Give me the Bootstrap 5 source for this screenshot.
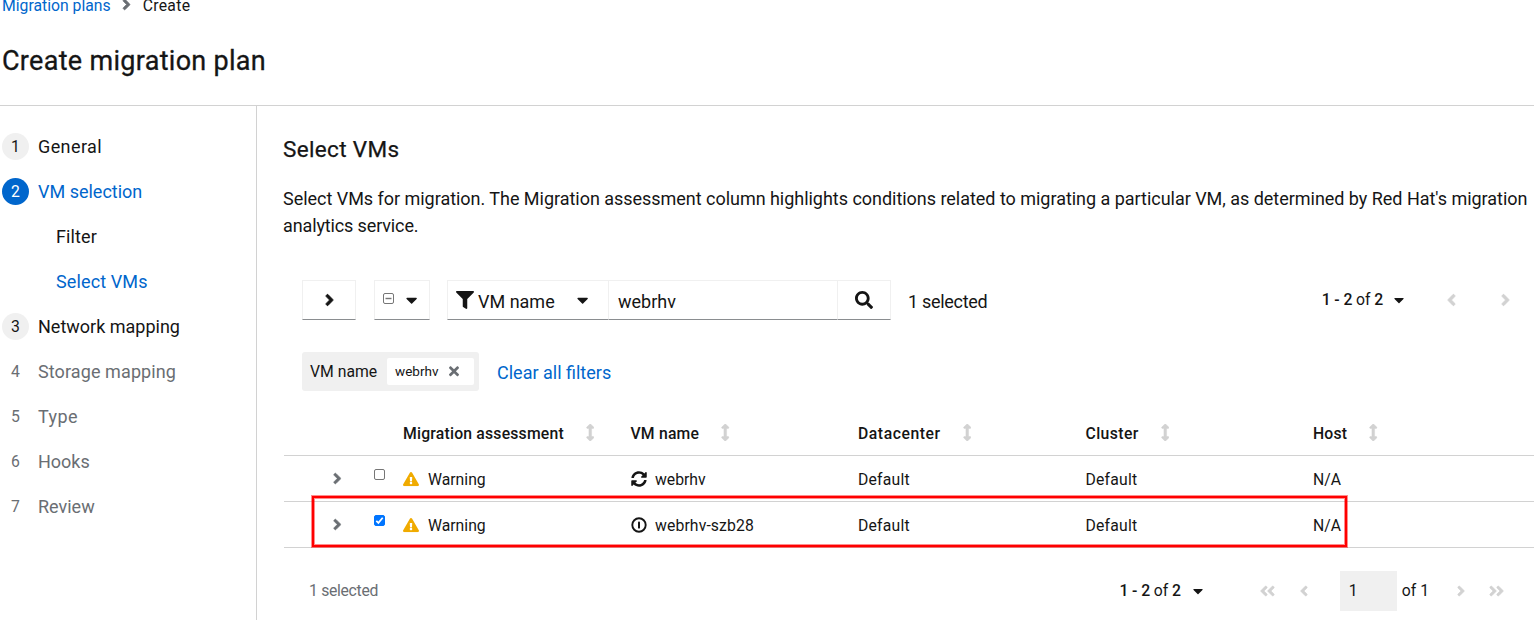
<!DOCTYPE html>
<html lang="en">
<head>
<meta charset="utf-8">
<title>Create migration plan</title>
<link href="https://cdn.jsdelivr.net/npm/bootstrap@5.3.0/dist/css/bootstrap.min.css" rel="stylesheet">
<style>
body{font-family:Roboto,sans-serif;font-size:18px;line-height:27px;color:#151515;background:#fff;height:620px;overflow:hidden}
a{color:#06c;text-decoration:none}
svg{display:block;fill:currentColor;flex:none}
.fs-sm{font-size:15.75px;line-height:24px}
.page-head{display:flow-root;height:106px;border-bottom:1px solid #d2d2d2;padding-left:2px}
.crumbs{height:12px;line-height:12px}
.crumbs svg{color:#6a6e73;margin:-4px 12px 0 11px}
.page-title{font-size:27px;line-height:35px;font-weight:400;margin:32px 0 0;letter-spacing:.3px;-webkit-text-stroke:.3px}
.steps{width:257px;height:514px;border-right:1px solid #d2d2d2;padding:18px 0 0 2px;flex:none}
.step{height:45px;color:#151515}
.step-no{width:27px;height:27px;border-radius:50%;font-size:15.75px;margin-right:9px}
.step-no.open{background:#f0f0f0}
.step.active,.substep.active{color:#06c}
.step.active .step-no{background:#06c;color:#fff}
.step.off{color:#6a6e73}
.substep{height:45px;padding-left:54px;letter-spacing:.12px}
.pane{padding:29px 0 0 26px;min-width:0}
.pane h2{font-size:22.5px;line-height:29px;font-weight:400;margin:0 0 21px;letter-spacing:.35px;-webkit-text-stroke:.25px}
.intro{margin:0 0 41px;white-space:nowrap;letter-spacing:-.03px}
.tools{padding-left:19px;height:40px}
.ctl{height:40px;border:1px solid #f0f0f0;border-bottom-color:#8a8d90;border-radius:0;padding:0;background:#fff;color:#151515}
.faint{color:#d2d2d2}
.filters{padding-left:19px;margin-top:32px;height:39px}
.chips{background:#f0f0f0;border-radius:3px;height:39px;width:177px;padding:0 5px 0 8px}
.chip{background:#fff;height:27px;width:87px;border-radius:2px;font-size:13.5px;padding:0 15px 0 8px}
.vm-grid{table-layout:fixed;width:1250px;margin-top:19px;margin-left:1px;font-size:15.75px;line-height:24px}
.vm-grid th,.vm-grid td{padding:0;height:46px;border-bottom:1px solid #d2d2d2;vertical-align:middle}
.vm-grid th{height:45px;font-weight:500}
.vm-grid th>div{letter-spacing:.2px;padding-top:3px}
.vm-grid td>div{padding-top:3px}
.sort{color:#d2d2d2;margin:-2px 0 0 22px}
.box{width:11px;height:11px;border:1px solid #767676;border-radius:2px;background:#fff;margin:-10px 0 0 37px;flex:none}
.box.on{background:#0075ff;border-color:#0075ff;color:#fff}
.mark-frame{position:absolute;left:29px;top:86px;width:1035px;height:51px;border:2px solid #f00;box-shadow:0 0 0 1px rgba(255,0,0,.45),inset 0 0 0 1px rgba(255,0,0,.45);pointer-events:none}
.foot{padding-left:26px;margin-top:23px;height:40px}
.page-no{width:57px;height:40px;background:#f0f0f0;border:0;padding:0 9px;font-size:15.75px}
.bold{font-weight:500}
</style>
</head>
<body>
<svg width="0" height="0" class="position-absolute" aria-hidden="true">
<symbol id="right" viewBox="0 0 256 512"><path stroke="currentColor" stroke-width="20" d="M224.3 273l-136 136c-9.4 9.4-24.6 9.4-33.9 0l-22.6-22.6c-9.4-9.4-9.4-24.6 0-33.9l96.4-96.4-96.4-96.4c-9.4-9.4-9.4-24.6 0-33.9L54.3 103c9.4-9.4 24.6-9.4 33.9 0l136 136c9.5 9.4 9.5 24.6.1 34z"/></symbol>
<symbol id="left" viewBox="0 0 256 512"><path stroke="currentColor" stroke-width="20" d="M31.7 239l136-136c9.4-9.4 24.6-9.4 33.9 0l22.6 22.6c9.4 9.4 9.4 24.6 0 33.9L127.9 256l96.4 96.4c9.4 9.4 9.4 24.6 0 33.9L201.7 409c-9.4 9.4-24.6 9.4-33.9 0l-136-136c-9.5-9.4-9.5-24.6-.1-34z"/></symbol>
<symbol id="caret" viewBox="0 0 320 512"><path d="M31.3 192h257.3c17.8 0 26.7 21.5 14.1 34.1L174.1 354.8c-7.8 7.8-20.5 7.8-28.3 0L17.2 226.1C4.6 213.5 13.5 192 31.3 192z"/></symbol>
<symbol id="sort" viewBox="0 0 256 512"><path stroke="currentColor" stroke-width="14" d="M214.059 377.941H168V134.059h46.059c21.382 0 32.09-25.851 16.971-40.971L144.971 7.029c-9.373-9.373-24.568-9.373-33.941 0L24.971 93.088c-15.119 15.119-4.411 40.971 16.971 40.971H88v243.882H41.941c-21.382 0-32.09 25.851-16.971 40.971l86.059 86.059c9.373 9.373 24.568 9.373 33.941 0l86.059-86.059c15.12-15.119 4.412-40.971-16.97-40.971z"/></symbol>
<symbol id="warn" viewBox="0 0 576 512"><path d="M569.517 440.013C587.975 472.007 564.806 512 527.94 512H48.054c-36.937 0-59.999-40.055-41.577-71.987L246.423 23.985c18.467-32.009 64.72-31.951 83.154 0l239.94 416.028zM288 354c-25.405 0-46 20.595-46 46s20.595 46 46 46 46-20.595 46-46-20.595-46-46-46zm-43.673-165.346l7.418 136c.347 6.364 5.609 11.346 11.982 11.346h48.546c6.373 0 11.635-4.982 11.982-11.346l7.418-136c.375-6.874-5.098-12.654-11.982-12.654h-63.383c-6.884 0-12.356 5.78-11.981 12.654z"/></symbol>
</svg>

<header class="page-head">
  <nav class="crumbs fs-sm d-flex align-items-center"><a href="#">Migration plans</a><svg width="9" height="17"><use href="#right"/></svg><span style="letter-spacing:.3px">Create</span></nav>
  <h1 class="page-title">Create migration plan</h1>
</header>

<div class="d-flex">
  <nav class="steps">
    <div class="step d-flex align-items-center"><span class="step-no open d-flex align-items-center justify-content-center">1</span><span style="letter-spacing:.4px">General</span></div>
    <div class="step active d-flex align-items-center"><span class="step-no d-flex align-items-center justify-content-center">2</span>VM selection</div>
    <div class="substep d-flex align-items-center">Filter</div>
    <div class="substep active d-flex align-items-center">Select VMs</div>
    <div class="step d-flex align-items-center"><span class="step-no open d-flex align-items-center justify-content-center">3</span>Network mapping</div>
    <div class="step off d-flex align-items-center"><span class="step-no d-flex align-items-center justify-content-center">4</span><span style="letter-spacing:.1px">Storage mapping</span></div>
    <div class="step off d-flex align-items-center"><span class="step-no d-flex align-items-center justify-content-center">5</span><span style="letter-spacing:.4px">Type</span></div>
    <div class="step off d-flex align-items-center"><span class="step-no d-flex align-items-center justify-content-center">6</span>Hooks</div>
    <div class="step off d-flex align-items-center"><span class="step-no d-flex align-items-center justify-content-center">7</span>Review</div>
  </nav>

  <main class="pane flex-grow-1">
    <h2>Select VMs</h2>
    <p class="intro">Select VMs for migration. The Migration assessment column highlights conditions related to migrating a particular VM, as determined by Red Hat's migration<br><span style="letter-spacing:-.13px">analytics service.</span></p>

    <div class="tools d-flex align-items-center">
      <button class="btn ctl d-flex align-items-center justify-content-center" style="width:54px"><svg width="9" height="18"><use href="#right"/></svg></button>
      <button class="btn ctl d-flex align-items-center" style="width:56px;margin-left:18px;padding-left:8px"><svg width="11" height="11" viewBox="0 0 11 11" stroke="#767676" style="fill:none;margin-top:-3px"><rect x=".5" y=".5" width="10" height="10" rx="1.5"/><path d="M2.5 5.5h6" stroke-width="1.4"/></svg><svg width="11.25" height="18" style="margin-left:12px"><use href="#caret"/></svg></button>
      <div class="d-flex" style="margin-left:17px">
        <button class="btn ctl d-flex align-items-center" style="width:162px;padding-left:8px;font-size:18px"><svg width="18" height="18" viewBox="0 0 512 512"><path d="M487.976 0H24.028C2.71 0-8.047 25.866 7.058 40.971L192 225.941V432c0 7.831 3.821 15.17 10.237 19.662l80 55.98C298.02 518.69 320 507.493 320 487.98V225.941l184.947-184.97C520.021 25.896 509.338 0 487.976 0z"/></svg><span style="margin:2px 0 0 4px">VM name</span><svg width="11.25" height="18" style="margin-left:22px"><use href="#caret"/></svg></button>
        <div class="ctl d-flex align-items-center" style="width:230px;margin-left:-1px;padding:2px 0 0 9px">webrhv</div>
        <button class="btn ctl d-flex align-items-center justify-content-center" style="width:54px;margin-left:-1px"><svg width="18" height="18" viewBox="0 0 512 512"><path d="M505 442.7L405.3 343c-4.5-4.5-10.6-7-17-7H372c27.6-35.3 44-79.7 44-128C416 93.1 322.9 0 208 0S0 93.1 0 208s93.1 208 208 208c48.3 0 92.7-16.4 128-44v16.3c0 6.4 2.5 12.5 7 17l99.7 99.7c9.4 9.4 24.6 9.4 33.9 0l28.3-28.3c9.4-9.4 9.4-24.6.1-34zM208 336c-70.7 0-128-57.2-128-128 0-70.7 57.2-128 128-128 70.7 0 128 57.2 128 128 0 70.7-57.2 128-128 128z"/></svg></button>
      </div>
      <span style="margin:2px 0 0 17px;letter-spacing:-.3px">1 selected</span>
      <div class="d-flex align-items-center ms-auto" style="margin-right:24px">
        <span class="fs-sm" style="letter-spacing:-.1px"><span class="bold">1 - 2</span> of <span class="bold">2</span></span>
        <svg width="10" height="16" style="margin-left:11px"><use href="#caret"/></svg>
        <svg class="faint" width="9" height="18" style="margin-left:43px"><use href="#left"/></svg>
        <svg class="faint" width="9" height="18" style="margin-left:45px"><use href="#right"/></svg>
      </div>
    </div>

    <div class="filters d-flex align-items-center">
      <div class="chips d-flex align-items-center justify-content-between"><span class="fs-sm">VM name</span><span class="chip d-flex align-items-center justify-content-between">webrhv<svg width="10" height="14.5" viewBox="0 0 352 512" style="color:#6a6e73"><path d="M242.72 256l100.07-100.07c12.28-12.28 12.28-32.19 0-44.48l-22.24-22.24c-12.28-12.28-32.19-12.28-44.48 0L176 189.28 75.93 89.21c-12.28-12.28-32.19-12.28-44.48 0L9.21 111.45c-12.28 12.28-12.28 32.19 0 44.48L109.28 256 9.21 356.07c-12.28 12.28-12.28 32.19 0 44.48l22.24 22.24c12.28 12.28 32.2 12.28 44.48 0L176 322.72l100.07 100.07c12.28 12.28 32.2 12.28 44.48 0l22.24-22.24c12.28-12.28 12.28-32.19 0-44.48L242.72 256z"/></svg></span></div>
      <a href="#" style="margin:1px 0 0 18px">Clear all filters</a>
    </div>

    <div class="position-relative">
      <table class="vm-grid">
        <colgroup><col style="width:119px"><col style="width:227.5px"><col style="width:227.5px"><col style="width:227.5px"><col style="width:227.5px"><col></colgroup>
        <thead><tr><th></th>
          <th><div class="d-flex align-items-center">Migration assessment<svg class="sort" width="8.5" height="17"><use href="#sort"/></svg></div></th>
          <th><div class="d-flex align-items-center">VM name<svg class="sort" width="8.5" height="17"><use href="#sort"/></svg></div></th>
          <th><div class="d-flex align-items-center" style="letter-spacing:.55px">Datacenter<svg class="sort" width="8.5" height="17"><use href="#sort"/></svg></div></th>
          <th><div class="d-flex align-items-center" style="letter-spacing:.4px">Cluster<svg class="sort" width="8.5" height="17"><use href="#sort"/></svg></div></th>
          <th><div class="d-flex align-items-center">Host<svg class="sort" width="8.5" height="17"><use href="#sort"/></svg></div></th></tr></thead>
        <tbody>
          <tr>
            <td><div class="d-flex align-items-center" style="padding-left:49px"><svg width="8.5" height="17" style="color:#6a6e73;margin-top:-3px"><use href="#right"/></svg><span class="box" style="margin-left:32px"></span></div></td>
            <td><div class="d-flex align-items-center"><svg width="16" height="14.2" style="color:#f0ab00"><use href="#warn"/></svg><span style="margin-left:9px">Warning</span></div></td>
            <td><div class="d-flex align-items-center"><svg width="16" height="16" viewBox="0 0 512 512" style="margin-top:-2px"><path d="M370.72 133.28C339.458 104.008 298.888 87.962 255.848 88c-77.458.068-144.328 53.178-162.791 126.85-1.344 5.363-6.122 9.15-11.651 9.15H24.103c-7.498 0-13.194-6.807-11.807-14.176C33.933 94.924 134.813 8 256 8c66.448 0 126.791 26.136 171.315 68.685L463.03 40.97C478.149 25.851 504 36.559 504 57.941V192c0 13.255-10.745 24-24 24H345.941c-21.382 0-32.09-25.851-16.971-40.971l41.75-41.749zM32 296h134.059c21.382 0 32.09 25.851 16.971 40.971l-41.75 41.75c31.262 29.273 71.835 45.319 114.876 45.28 77.418-.07 144.315-53.144 162.787-126.849 1.344-5.363 6.122-9.15 11.651-9.15h57.304c7.498 0 13.194 6.807 11.807 14.176C478.067 417.076 377.187 504 256 504c-66.448 0-126.791-26.136-171.315-68.685L48.97 471.03C33.851 486.149 8 475.441 8 454.059V320c0-13.255 10.745-24 24-24z"/></svg><span style="margin-left:8.5px">webrhv</span></div></td>
            <td><div style="letter-spacing:.2px">Default</div></td><td><div style="letter-spacing:.2px">Default</div></td><td><div>N/A</div></td>
          </tr>
          <tr>
            <td><div class="d-flex align-items-center" style="padding-left:49px"><svg width="8.5" height="17" style="color:#6a6e73;margin-top:-3px"><use href="#right"/></svg><span class="box on" style="margin-left:32px"><svg width="9" height="9" viewBox="0 0 9 9" stroke="#fff" stroke-width="1.7" style="fill:none"><path d="M1.3 4.8l2.1 2.1 4.3-5.2"/></svg></span></div></td>
            <td><div class="d-flex align-items-center"><svg width="16" height="14.2" style="color:#f0ab00"><use href="#warn"/></svg><span style="margin-left:9px">Warning</span></div></td>
            <td><div class="d-flex align-items-center"><svg width="16" height="16" viewBox="0 0 16 16" style="margin-top:-2px"><circle cx="8" cy="8" r="6.7" fill="none" stroke="currentColor" stroke-width="1.9"/><rect x="7" y="4.4" width="2" height="7.2" rx=".9"/></svg><span style="margin-left:8.5px;letter-spacing:.12px">webrhv-szb28</span></div></td>
            <td><div style="letter-spacing:.2px">Default</div></td><td><div style="letter-spacing:.2px">Default</div></td><td><div>N/A</div></td>
          </tr>
        </tbody>
      </table>
      <div class="mark-frame"></div>
    </div>

    <div class="foot d-flex align-items-center fs-sm">
      <span style="color:#6a6e73;letter-spacing:-.3px">1 selected</span>
      <div class="d-flex align-items-center ms-auto" style="margin-right:30px">
        <span style="letter-spacing:-.1px"><span class="bold">1 - 2</span> of <span class="bold">2</span></span>
        <svg width="10" height="16" style="margin-left:12px"><use href="#caret"/></svg>
        <span class="faint d-flex" style="margin-left:57px"><svg width="8" height="16"><use href="#left"/></svg><svg width="8" height="16" style="margin-left:-1px"><use href="#left"/></svg></span>
        <svg class="faint" width="8" height="16" style="margin-left:25px"><use href="#left"/></svg>
        <span class="page-no d-flex align-items-center" style="margin-left:32px;margin-right:5px">1</span><span>of 1</span>
        <svg class="faint" width="8" height="16" style="margin-left:28px"><use href="#right"/></svg>
        <span class="faint d-flex" style="margin-left:24px"><svg width="8" height="16"><use href="#right"/></svg><svg width="8" height="16" style="margin-left:-1px"><use href="#right"/></svg></span>
      </div>
    </div>
  </main>
</div>
<script src="https://cdn.jsdelivr.net/npm/bootstrap@5.3.0/dist/js/bootstrap.bundle.min.js"></script>
</body>
</html>
